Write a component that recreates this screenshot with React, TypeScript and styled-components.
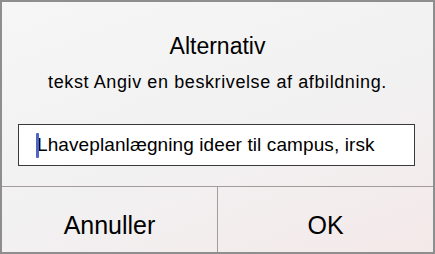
import styled, { createGlobalStyle } from "styled-components";

const GlobalStyle = createGlobalStyle`
  html, body {
    margin: 0;
    padding: 0;
  }
  body {
    font-family: "Liberation Sans", Arial, sans-serif;
  }
`

const Dialog = styled.div`
  box-sizing: border-box;
  width: 435px;
  height: 254px;
  border: 2px solid #8e8e8e;
  background: linear-gradient(160deg, #f6f6f6 0%, #f2f1f2 55%, #f4e9e9 100%);
  display: flex;
  flex-direction: column;
  color: #000;
`

const Header = styled.div`
  display: flex;
  flex-direction: column;
  align-items: center;
  padding-top: 31px;
`

const Title = styled.div`
  font-size: 23px;
  line-height: 26px;
`

const Subtitle = styled.div`
  font-size: 18px;
  line-height: 20px;
  margin-top: 13px;
  letter-spacing: 0.6px;
`

const InputRow = styled.div`
  padding: 0 18px 0 16px;
  margin-top: 32px;
`

const TextBox = styled.div`
  position: relative;
  box-sizing: border-box;
  height: 42px;
  border: 1px solid #3a3a3a;
  background: #fff;
  display: flex;
  align-items: center;
  padding-left: 18px;
  font-size: 19px;
  letter-spacing: 0.1px;
  white-space: nowrap;
  overflow: hidden;
`

const Caret = styled.span`
  position: absolute;
  left: 17px;
  top: 8px;
  width: 3px;
  height: 25px;
  background: #4f64c4;
  border-radius: 1px;
`

const Buttons = styled.div`
  margin-top: auto;
  height: 65px;
  border-top: 1px solid #a49c9c;
  display: grid;
  grid-template-columns: 215px 1fr;
`

const Button = styled.button<{ $divider?: boolean }>`
  border: none;
  border-left: ${(p) => (p.$divider ? "1px solid #a49c9c" : "none")};
  background: transparent;
  font-family: "Liberation Sans", Arial, sans-serif;
  font-size: 25px;
  color: #000;
  padding: 12px 0 0;
  display: flex;
  align-items: center;
  justify-content: center;
`

export default function App() {
  return (
    <>
      <GlobalStyle />
      <Dialog>
        <Header>
          <Title>Alternativ</Title>
          <Subtitle>tekst Angiv en beskrivelse af afbildning.</Subtitle>
        </Header>
        <InputRow>
          <TextBox>
            <Caret />
            Lhaveplanlægning ideer til campus, irsk
          </TextBox>
        </InputRow>
        <Buttons>
          <Button>Annuller</Button>
          <Button $divider>OK</Button>
        </Buttons>
      </Dialog>
    </>
  );
}
